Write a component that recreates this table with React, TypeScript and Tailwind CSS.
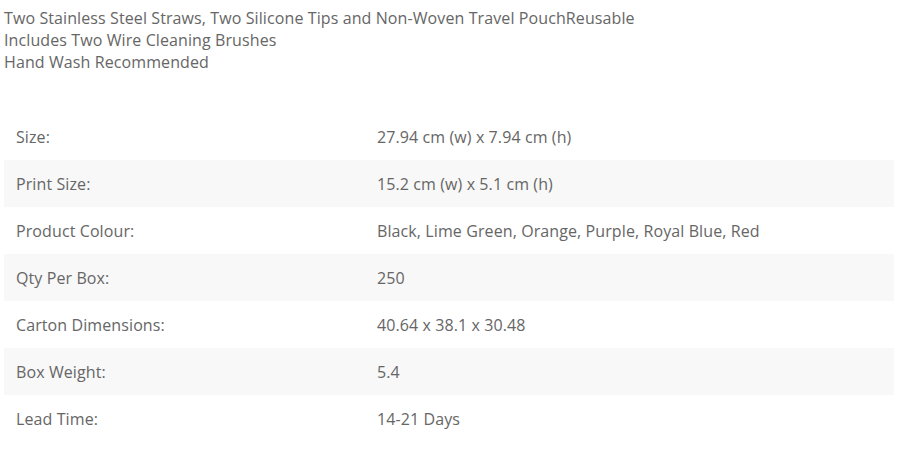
const specs = [
  ['Size:', '27.94 cm (w) x 7.94 cm (h)'],
  ['Print Size:', '15.2 cm (w) x 5.1 cm (h)'],
  ['Product Colour:', 'Black, Lime Green, Orange, Purple, Royal Blue, Red'],
  ['Qty Per Box:', '250'],
  ['Carton Dimensions:', '40.64 x 38.1 x 30.48'],
  ['Box Weight:', '5.4'],
  ['Lead Time:', '14-21 Days'],
]

export default function App() {
  return (
    <div className="min-h-[458px] bg-white px-[4px] pt-[7px] text-[16px] leading-[22px] tracking-[0.1px] text-[#666] font-['Open_Sans',sans-serif]">
      <div>
        Two Stainless Steel Straws, Two Silicone Tips and Non-Woven Travel PouchReusable
        <br />
        Includes Two Wire Cleaning Brushes
        <br />
        Hand Wash Recommended
      </div>

      <table className="mt-[40px] w-[890px] border-collapse">
        <tbody>
          {specs.map(([label, value], i) => (
            <tr key={label} className={i % 2 === 1 ? 'bg-[#f8f8f8]' : ''}>
              <td className="h-[47px] w-[361px] px-3 pt-[1px] align-middle">{label}</td>
              <td className="h-[47px] px-3 pt-[1px] align-middle">{value}</td>
            </tr>
          ))}
        </tbody>
      </table>
    </div>
  )
}
